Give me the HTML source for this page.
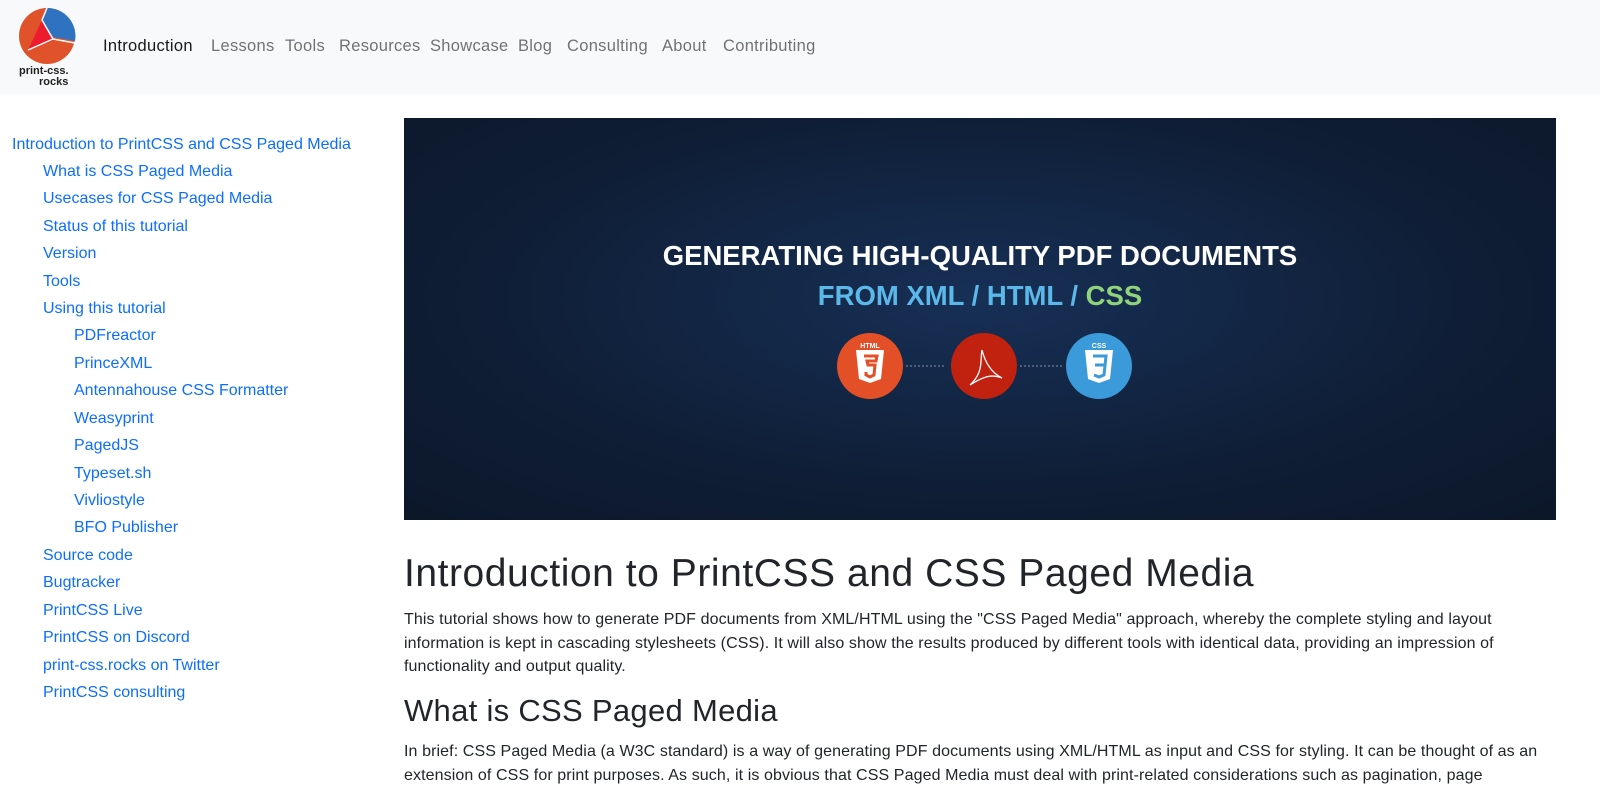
<!DOCTYPE html>
<html><head><meta charset="utf-8"><style>
body{margin:0;font-family:"Liberation Sans",sans-serif;background:#fff;color:#212529;width:1600px;height:800px;overflow:hidden;position:relative}
.nav{position:absolute;left:0;top:0;width:1600px;height:94px;background:#f8f9fa}
.nav a{position:absolute;top:37px;font-size:16.5px;color:rgba(0,0,0,.55);text-decoration:none;letter-spacing:.3px}
.side{position:absolute;left:0;top:0}
.side a{position:absolute;font-size:16px;color:#0d6efd;white-space:nowrap;letter-spacing:0}
.banner{position:absolute;left:404px;top:118px;width:1152px;height:402px;background:radial-gradient(ellipse at 50% 45%,#173056 0%,#0f1e36 60%,#0c1729 100%)}
h1{position:absolute;left:404px;top:552px;margin:0;font-weight:400;font-size:39px;letter-spacing:.55px}
h2{position:absolute;left:404px;top:693px;margin:0;font-weight:400;font-size:31px;letter-spacing:.3px}
p{position:absolute;left:404px;margin:0;font-size:16px;line-height:23.5px;width:1150px;letter-spacing:.1px}
</style></head><body>
<div class="nav">
<svg style="position:absolute;left:18px;top:7px" width="60" height="58" viewBox="0 0 60 58">
<circle cx="29" cy="29" r="28" fill="#e0522a"/>
<path d="M29 1 A28 28 0 0 1 57 34 L35 30 L24 13 Z" fill="#2e72c0"/>
<path d="M24 13 L36 33 L10 43 Z" fill="#ec1c2e"/>
<path d="M24 13 L35 32 M10 43 L35 32 L57 36 M24 13 L29 1" stroke="#fff" stroke-width="1.5" fill="none"/>
</svg>
<div style="position:absolute;left:19px;top:66px;font-weight:700;font-size:11px;line-height:11px;color:#222">print-css.<br><span style="padding-left:20px">rocks</span></div>
<a style="left:103px;color:rgba(0,0,0,.9)">Introduction</a>
<a style="left:211px">Lessons</a><a style="left:285px">Tools</a><a style="left:339px">Resources</a><a style="left:430px">Showcase</a><a style="left:518px">Blog</a><a style="left:567px">Consulting</a><a style="left:662px">About</a><a style="left:723px">Contributing</a>
</div>
<div class="side">
<a style="left:12px;top:136px">Introduction to PrintCSS and CSS Paged Media</a>
<a style="left:43px;top:163px">What is CSS Paged Media</a>
<a style="left:43px;top:190px">Usecases for CSS Paged Media</a>
<a style="left:43px;top:218px">Status of this tutorial</a>
<a style="left:43px;top:245px">Version</a>
<a style="left:43px;top:273px">Tools</a>
<a style="left:43px;top:300px">Using this tutorial</a>
<a style="left:74px;top:327px">PDFreactor</a>
<a style="left:74px;top:355px">PrinceXML</a>
<a style="left:74px;top:382px">Antennahouse CSS Formatter</a>
<a style="left:74px;top:410px">Weasyprint</a>
<a style="left:74px;top:437px">PagedJS</a>
<a style="left:74px;top:465px">Typeset.sh</a>
<a style="left:74px;top:492px">Vivliostyle</a>
<a style="left:74px;top:519px">BFO Publisher</a>
<a style="left:43px;top:547px">Source code</a>
<a style="left:43px;top:574px">Bugtracker</a>
<a style="left:43px;top:602px">PrintCSS Live</a>
<a style="left:43px;top:629px">PrintCSS on Discord</a>
<a style="left:43px;top:657px">print-css.rocks on Twitter</a>
<a style="left:43px;top:684px">PrintCSS consulting</a>
</div>
<div class="banner">
<div style="position:absolute;left:0;width:100%;top:122px;text-align:center;color:#fff;font-weight:700;font-size:27.5px">GENERATING HIGH-QUALITY PDF DOCUMENTS</div>
<div style="position:absolute;left:0;width:100%;top:162px;text-align:center;font-weight:700;font-size:27.5px"><span style="color:#5bb8e8">FROM XML / HTML / </span><span style="color:#8fd37a">CSS</span></div>
<svg style="position:absolute;left:430px;top:212px" width="300" height="70">
<circle cx="36" cy="36" r="33" fill="#e34f26"/>
<path d="M22 20 H50 L47 49 L36 53 L25 49 Z" fill="#fff"/>
<text x="36" y="18" font-size="7" font-weight="700" fill="#fff" text-anchor="middle" font-family="Liberation Sans">HTML</text>
<path d="M30 26 H43 L42 31 H33 L34 35 H41 L40 45 L36 47 L32 45 L32 42" stroke="#e34f26" stroke-width="3" fill="none"/>
<line x1="72" y1="36" x2="112" y2="36" stroke="#8899aa" stroke-dasharray="2 2"/>
<circle cx="150" cy="36" r="33" fill="#c0220f"/>
<path d="M148 20 C146 30 150 42 136 55 C150 46 158 44 168 48 C160 44 152 36 148 20Z" stroke="#fff" stroke-width="1.3" fill="none"/>
<line x1="186" y1="36" x2="228" y2="36" stroke="#8899aa" stroke-dasharray="2 2"/>
<circle cx="265" cy="36" r="33" fill="#3b9ad9"/>
<path d="M251 20 H279 L276 49 L265 53 L254 49 Z" fill="#fff"/>
<text x="265" y="18" font-size="7" font-weight="700" fill="#fff" text-anchor="middle" font-family="Liberation Sans">CSS</text>
<path d="M259 26 H272 L270 45 L265 47 L260 45 M261 35 H270" stroke="#3b9ad9" stroke-width="3" fill="none"/>
</svg>
</div>
<h1>Introduction to PrintCSS and CSS Paged Media</h1>
<p style="top:608px">This tutorial shows how to generate PDF documents from XML/HTML using the "CSS Paged Media" approach, whereby the complete styling and layout information is kept in cascading stylesheets (CSS). It will also show the results produced by different tools with identical data, providing an impression of functionality and output quality.</p>
<h2>What is CSS Paged Media</h2>
<p style="top:740px">In brief: CSS Paged Media (a W3C standard) is a way of generating PDF documents using XML/HTML as input and CSS for styling. It can be thought of as an extension of CSS for print purposes. As such, it is obvious that CSS Paged Media must deal with print-related considerations such as pagination, page</p>
</body></html>
